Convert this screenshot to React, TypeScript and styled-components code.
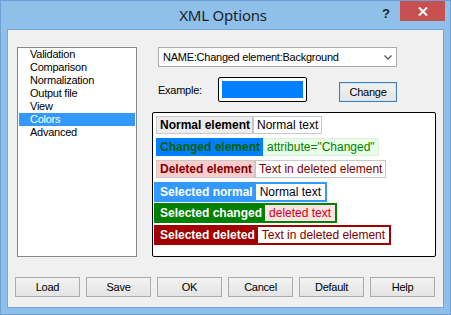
import React from "react";
import styled, { createGlobalStyle } from "styled-components";

const Global = createGlobalStyle`
  html, body { margin: 0; padding: 0; background: #ffffff; }
  body { font-family: "Liberation Sans", Arial, sans-serif; }
  * { box-sizing: border-box; }
`;

const Window = styled.div`
  width: 451px;
  height: 315px;
  background: #8fc0ea;
  border: 1px solid #6f9fd4;
  display: flex;
  flex-direction: column;
`;

const TitleBar = styled.div`
  height: 28px;
  display: grid;
  grid-template-columns: 1fr auto 1fr;
  align-items: start;
  padding-right: 5px;
`;

const Title = styled.div`
  font-family: "Noto Sans", "Open Sans", sans-serif;
  font-size: 15px;
  letter-spacing: -0.2px;
  color: #1e1e1e;
  line-height: 28px;
`;

const Controls = styled.div`
  justify-self: end;
  display: flex;
  align-items: flex-start;
`;

const HelpGlyph = styled.div`
  font-family: "Liberation Sans", Arial, sans-serif;
  font-weight: bold;
  font-size: 13px;
  color: #1e1e1e;
  margin-top: 5px;
  margin-right: 10px;
`;

const CloseButton = styled.div`
  width: 45px;
  height: 20px;
  background: #c75050;
  display: flex;
  align-items: center;
  justify-content: center;
`;

const Client = styled.div`
  flex: 1;
  margin: 0 6px 6px 6px;
  border: 1px solid #76a5da;
  background: #f0f0f0;
  display: flex;
  flex-direction: column;
  padding-top: 17px;
  padding-bottom: 10px;
`;

const MainRow = styled.div`
  height: 210px;
  display: flex;
  gap: 15px;
  padding: 0 7px 0 9px;
`;

const ListBox = styled.div`
  width: 120px;
  height: 210px;
  border: 1px solid #828790;
  background: #ffffff;
  padding: 0 1px;
`;

const ListItem = styled.div<{ $selected?: boolean }>`
  height: 13px;
  line-height: 13px;
  font-size: 11px;
  letter-spacing: -0.25px;
  padding-left: 11px;
  color: ${(p) => (p.$selected ? "#ffffff" : "#000000")};
  background: ${(p) => (p.$selected ? "#3399ff" : "transparent")};
`;

const RightPane = styled.div`
  flex: 1;
  display: flex;
  flex-direction: column;
`;

const Combo = styled.div`
  margin-left: 6px;
  width: 239px;
  height: 20px;
  background: #ffffff;
  border: 1px solid #acacac;
  display: flex;
  align-items: center;
  justify-content: space-between;
  padding: 0 4px 0 4px;
  font-size: 11px;
  letter-spacing: -0.25px;
  color: #000;
`;

const ExampleRow = styled.div`
  margin-top: 10px;
  margin-left: 6px;
  width: 239px;
  display: flex;
  align-items: flex-end;
`;

const ExampleLabel = styled.div`
  width: 60px;
  align-self: center;
  font-size: 11px;
  letter-spacing: -0.25px;
  color: #000;
`;

const Swatch = styled.div`
  width: 89px;
  height: 25px;
  border: 1px solid #000;
  border-radius: 2px;
  background: #ffffff;
  padding: 3px;
`;

const SwatchFill = styled.div<{ $color: string }>`
  width: 100%;
  height: 100%;
  background: ${(p) => p.$color};
`;

const Button = styled.div<{ $default?: boolean; $w: number }>`
  width: ${(p) => p.$w}px;
  height: 20px;
  border: 1px solid ${(p) => (p.$default ? "#3c7fb1" : "#acacac")};
  box-shadow: ${(p) => (p.$default ? "inset 0 0 0 1px #cfe6f8" : "none")};
  background: linear-gradient(#f2f2f2, #e4e4e4);
  display: flex;
  align-items: center;
  justify-content: center;
  font-size: 11px;
  letter-spacing: -0.25px;
  color: #000;
`;

const ChangeButton = styled(Button)`
  margin-left: auto;
`;

const Preview = styled.div`
  margin-top: 10px;
  flex: 1;
  background: #ffffff;
  border: 1px solid #000;
  border-radius: 2px;
  padding: 1px;
  display: flex;
  flex-direction: column;
  align-items: flex-start;
`;

const SampleRow = styled.div<{ $bg: string; $mt: number; $h: number }>`
  display: flex;
  align-items: stretch;
  padding: 2px;
  height: ${(p) => p.$h}px;
  margin-top: ${(p) => p.$mt}px;
  background: ${(p) => p.$bg};
`;

const LabelCell = styled.div<{ $bg: string; $color: string; $border: string }>`
  display: flex;
  align-items: center;
  padding: 0 2px 0 3px;
  border: 1px solid ${(p) => p.$border};
  background: ${(p) => p.$bg};
  color: ${(p) => p.$color};
  font-size: 12px;
  font-weight: bold;
  white-space: nowrap;
`;

const ValueCell = styled.div<{ $bg: string; $color: string; $border: string }>`
  display: flex;
  align-items: center;
  padding: 0 3px 0 3px;
  border: 1px solid ${(p) => p.$border};
  background: ${(p) => p.$bg};
  color: ${(p) => p.$color};
  font-size: 12px;
  white-space: nowrap;
`;

const ButtonRow = styled.div`
  margin-top: 20px;
  display: flex;
  justify-content: space-between;
  padding: 0 8px 0 7px;
`;

const items = [
  "Validation",
  "Comparison",
  "Normalization",
  "Output file",
  "View",
  "Colors",
  "Advanced",
];

type Sample = {
  rowBg: string;
  mt: number;
  h: number;
  label: string;
  labelBg: string;
  labelColor: string;
  labelBorder: string;
  value: string;
  valueBg: string;
  valueColor: string;
  valueBorder: string;
};

const samples: Sample[] = [
  {
    rowBg: "transparent", mt: 0, h: 22,
    label: "Normal element", labelBg: "#ececec", labelColor: "#000", labelBorder: "#c8c8c8",
    value: "Normal text", valueBg: "#ffffff", valueColor: "#000", valueBorder: "#c8c8c8",
  },
  {
    rowBg: "transparent", mt: 0, h: 22,
    label: "Changed element", labelBg: "#0080ff", labelColor: "#006000", labelBorder: "#0080ff",
    value: 'attribute="Changed"', valueBg: "#e8ffe8", valueColor: "#008000", valueBorder: "#ddeedd",
  },
  {
    rowBg: "transparent", mt: 0, h: 22,
    label: "Deleted element", labelBg: "#ffcccc", labelColor: "#800000", labelBorder: "#c8c8c8",
    value: "Text in deleted element", valueBg: "#ffffff", valueColor: "#800000", valueBorder: "#c8c8c8",
  },
  {
    rowBg: "#3399ff", mt: 2, h: 20,
    label: "Selected normal", labelBg: "transparent", labelColor: "#ffffff", labelBorder: "transparent",
    value: "Normal text", valueBg: "#ffffff", valueColor: "#000020", valueBorder: "#ffffff",
  },
  {
    rowBg: "#008000", mt: 1, h: 20,
    label: "Selected changed", labelBg: "transparent", labelColor: "#ffffff", labelBorder: "transparent",
    value: "deleted text", valueBg: "#ffe4e4", valueColor: "#cc0020", valueBorder: "#ffe4e4",
  },
  {
    rowBg: "#a00000", mt: 2, h: 20,
    label: "Selected deleted", labelBg: "transparent", labelColor: "#ffffff", labelBorder: "transparent",
    value: "Text in deleted element", valueBg: "#ffffff", valueColor: "#800000", valueBorder: "#ffffff",
  },
];

const bottomButtons = ["Load", "Save", "OK", "Cancel", "Default", "Help"];

export default function App() {
  return (
    <>
      <Global />
      <Window>
        <TitleBar>
          <div />
          <Title>XML Options</Title>
          <Controls>
            <HelpGlyph>?</HelpGlyph>
            <CloseButton>
              <svg width="10" height="9" viewBox="0 0 10 9">
                <path d="M1 0.5 L9 8.5 M9 0.5 L1 8.5" stroke="#ffffff" strokeWidth="2" fill="none" />
              </svg>
            </CloseButton>
          </Controls>
        </TitleBar>
        <Client>
          <MainRow>
            <ListBox>
              {items.map((it) => (
                <ListItem key={it} $selected={it === "Colors"}>
                  {it}
                </ListItem>
              ))}
            </ListBox>
            <RightPane>
              <Combo>
                <span>NAME:Changed element:Background</span>
                <svg width="8" height="5" viewBox="0 0 8 5">
                  <path d="M0.5 0.5 L4 4 L7.5 0.5" stroke="#606060" strokeWidth="1.4" fill="none" />
                </svg>
              </Combo>
              <ExampleRow>
                <ExampleLabel>Example:</ExampleLabel>
                <Swatch>
                  <SwatchFill $color="#0080ff" />
                </Swatch>
                <ChangeButton $default $w={58}>
                  Change
                </ChangeButton>
              </ExampleRow>
              <Preview>
                {samples.map((s) => (
                  <SampleRow key={s.label} $bg={s.rowBg} $mt={s.mt} $h={s.h}>
                    <LabelCell $bg={s.labelBg} $color={s.labelColor} $border={s.labelBorder}>
                      {s.label}
                    </LabelCell>
                    <ValueCell $bg={s.valueBg} $color={s.valueColor} $border={s.valueBorder}>
                      {s.value}
                    </ValueCell>
                  </SampleRow>
                ))}
              </Preview>
            </RightPane>
          </MainRow>
          <ButtonRow>
            {bottomButtons.map((b) => (
              <Button key={b} $w={65}>
                {b}
              </Button>
            ))}
          </ButtonRow>
        </Client>
      </Window>
    </>
  );
}
